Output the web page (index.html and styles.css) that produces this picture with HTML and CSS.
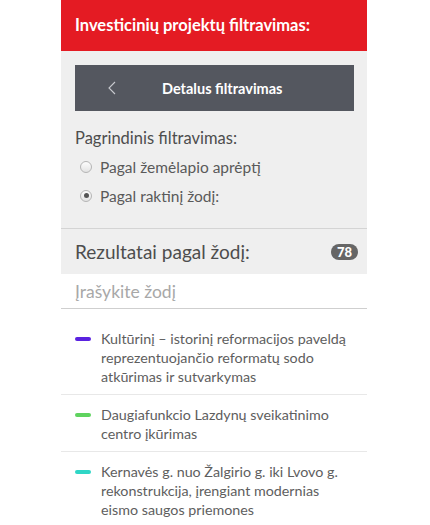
FILE: index.html
```html
<!DOCTYPE html>
<html lang="lt">
<head>
<meta charset="utf-8">
<link rel="stylesheet" href="styles.css">
</head>
<body>
<div class="panel">
  <div class="header">Investicinių projektų filtravimas:</div>
  <div class="filters">
    <div class="detail-btn">
      <svg class="chev" width="8" height="14" viewBox="0 0 8 14"><path d="M7 1 L1 7 L7 13" fill="none" stroke="#c8cacf" stroke-width="1.1"/></svg>
      <span class="btn-label">Detalus filtravimas</span>
    </div>
    <div class="main-label">Pagrindinis filtravimas:</div>
    <label class="radio"><span class="dot"></span>Pagal žemėlapio aprėptį</label>
    <label class="radio"><span class="dot checked"></span>Pagal raktinį žodį:</label>
  </div>
  <div class="results-head">
    <span class="results-title">Rezultatai pagal žodį:</span>
    <span class="badge">78</span>
  </div>
  <div class="search">Įrašykite žodį</div>
  <ul class="list">
    <li class="item"><span class="bar purple"></span><span class="txt">Kultūrinį – istorinį reformacijos paveldą reprezentuojančio reformatų sodo atkūrimas ir sutvarkymas</span></li>
    <li class="item"><span class="bar green"></span><span class="txt">Daugiafunkcio Lazdynų sveikatinimo centro įkūrimas</span></li>
    <li class="item"><span class="bar teal"></span><span class="txt">Kernavės g. nuo Žalgirio g. iki Lvovo g. rekonstrukcija, įrengiant modernias eismo saugos priemones</span></li>
  </ul>
</div>
</body>
</html>
```
FILE: styles.css
```css
* { box-sizing: border-box; }
html, body { margin: 0; padding: 0; background: #fff; }
body { font-family: Lato, "Open Sans", sans-serif; color: #4a4a4a; }
.panel { width: 306px; margin-left: 61px; }
.header {
  height: 51px;
  background: #e41b23;
  color: #fff;
  font-weight: 700;
  font-size: 16.5px;
  display: flex;
  align-items: center;
  padding-left: 14px;
  padding-bottom: 2px;
}
.filters {
  background: #efefef;
  padding: 14px 13px 0 14px;
  height: 178px;
  border-bottom: 1px solid #d4d4d4;
}
.detail-btn {
  height: 46px;
  background: #54575f;
  display: flex;
  align-items: center;
}
.chev { margin-left: 33px; }
.btn-label {
  color: #fff;
  font-weight: 700;
  font-size: 14.5px;
  margin-left: 46px;
}
.main-label {
  margin-top: 17px;
  font-size: 16.5px;
  color: #4d4d4d;
  line-height: 20px;
}
.radio {
  display: flex;
  align-items: center;
  font-size: 15.5px;
  color: #5a5a5a;
  height: 29px;
  margin-left: 5px;
}
.radio:first-of-type { margin-top: 4px; }
.dot {
  width: 12px;
  height: 12px;
  border-radius: 50%;
  border: 1px solid #b5b5b5;
  background: linear-gradient(#fdfdfd, #e3e3e3);
  margin-right: 8px;
  position: relative;
}
.dot.checked::after {
  content: "";
  position: absolute;
  left: 2.5px; top: 2.5px;
  width: 5px; height: 5px;
  border-radius: 50%;
  background: #555;
}
.results-head {
  height: 45px;
  background: #efefef;
  display: flex;
  align-items: center;
  justify-content: space-between;
  padding: 0 9px 0 14px;
}
.results-title { font-size: 19px; color: #4d4d4d; }
.badge {
  background: #666;
  color: #fff;
  font-weight: 900;
  font-size: 13px;
  height: 16px;
  min-width: 27px;
  border-radius: 8px;
  display: flex;
  align-items: center;
  justify-content: center;
}
.search {
  height: 35px;
  border-bottom: 1px solid #cfcfcf;
  font-size: 17.5px;
  color: #a8a8a8;
  padding-left: 14px;
  display: flex;
  align-items: center;
}
.list { list-style: none; margin: 0; padding: 10px 0 0 0; }
.item {
  display: flex;
  align-items: flex-start;
  padding: 10px 14px 8px 14px;
  border-bottom: 1px solid #e8e8e8;
}
.item:last-child { border-bottom: none; }
.bar {
  flex: none;
  width: 16px;
  height: 4px;
  border-radius: 2px;
  margin-top: 8px;
  margin-right: 10px;
}
.purple { background: #5a22e0; }
.green { background: #5fd35f; }
.teal { background: #2fd6c6; }
.txt { font-size: 14.3px; line-height: 19px; color: #5e5e5e; }
```
